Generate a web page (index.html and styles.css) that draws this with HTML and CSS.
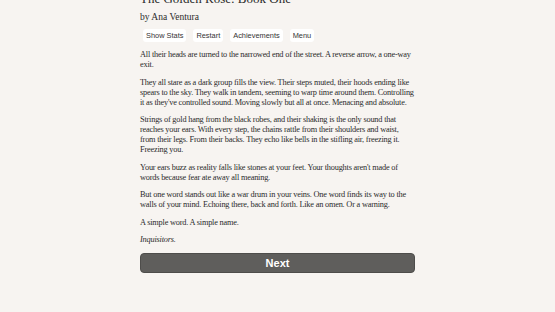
FILE: index.html
```html
<!DOCTYPE html>
<html lang="en">
<head>
  <meta charset="UTF-8" />
  <meta name="viewport" content="width=device-width, initial-scale=1.0" />
  <title>The Golden Rose: Book One</title>
  <link rel="stylesheet" href="styles.css">
</head>
<body>
  <div class="container">
    <!-- Cabecera -->
    <h1 class="title">The Golden Rose: Book One</h1>
    <h2 class="author">by Ana Ventura</h2>

    <div class="buttons">
      <button class="small-btn">Show Stats</button>
      <button class="small-btn">Restart</button>
      <button class="small-btn">Achievements</button>
      <button class="small-btn">Menu</button>
    </div>

    <!-- Texto de la escena -->
    <div class="story">
      <p>All their heads are turned to the narrowed end of the street. A reverse arrow, a one-way exit.</p>
      <p>They all stare as a dark group fills the view. Their steps muted, their hoods ending like spears to the sky. They walk in tandem, seeming to warp time around them. Controlling it as they've controlled sound. Moving slowly but all at once. Menacing and absolute.</p>
      <p>Strings of gold hang from the black robes, and their shaking is the only sound that reaches your ears. With every step, the chains rattle from their shoulders and waist,<br>from their legs. From their backs. They echo like bells in the stifling air, freezing it. Freezing you.</p>
      <p>Your ears buzz as reality falls like stones at your feet. Your thoughts aren't made of words because fear ate away all meaning.</p>
      <p>But one word stands out like a war drum in your veins. One word finds its way to the walls of your mind. Echoing there, back and forth. Like an omen. Or a warning.</p>
      <p>A simple word. A simple name.</p>
      <p><i>Inquisitors.</i></p>
    </div>

    <button class="next-btn">Next</button>
  </div>
</body>
</html>
```

FILE: styles.css
```css
body {
  margin: 0;
  background: #f7f4f1;
  color: #2b2b2b;
  font-family: "Liberation Serif", serif;
}

.container {
  width: 276px;
  margin: -9px auto 0;
  padding-left: 1px;
}

.title {
  font-size: 13px;
  font-weight: normal;
  margin: 0;
  line-height: 16px;
}

.author {
  font-size: 9.5px;
  font-weight: normal;
  margin: 4px 0 0;
  line-height: 12px;
}

/* Botones superiores */
.buttons {
  display: flex;
  gap: 7px;
  margin: 6px 0 0 3px;
}

.small-btn {
  font-family: "Liberation Sans", sans-serif;
  font-size: 7.4px;
  color: #333;
  background: #fff;
  border: none;
  border-radius: 3px;
  padding: 2px 3px;
  line-height: 9px;
}

/* Texto */
.story {
  margin-top: 8px;
  font-size: 8.3px;
  letter-spacing: -0.2px;
  line-height: 10px;
}

.story p {
  margin: 0 0 7.5px;
}

.next-btn {
  display: block;
  width: 275px;
  height: 20px;
  margin-top: 8px;
  background: #5f5e5c;
  color: #fff;
  border: 1px solid #4e4d4b;
  border-radius: 4px;
  font-family: "Liberation Sans", sans-serif;
  font-weight: bold;
  font-size: 11px;
  cursor: pointer;
}
```
